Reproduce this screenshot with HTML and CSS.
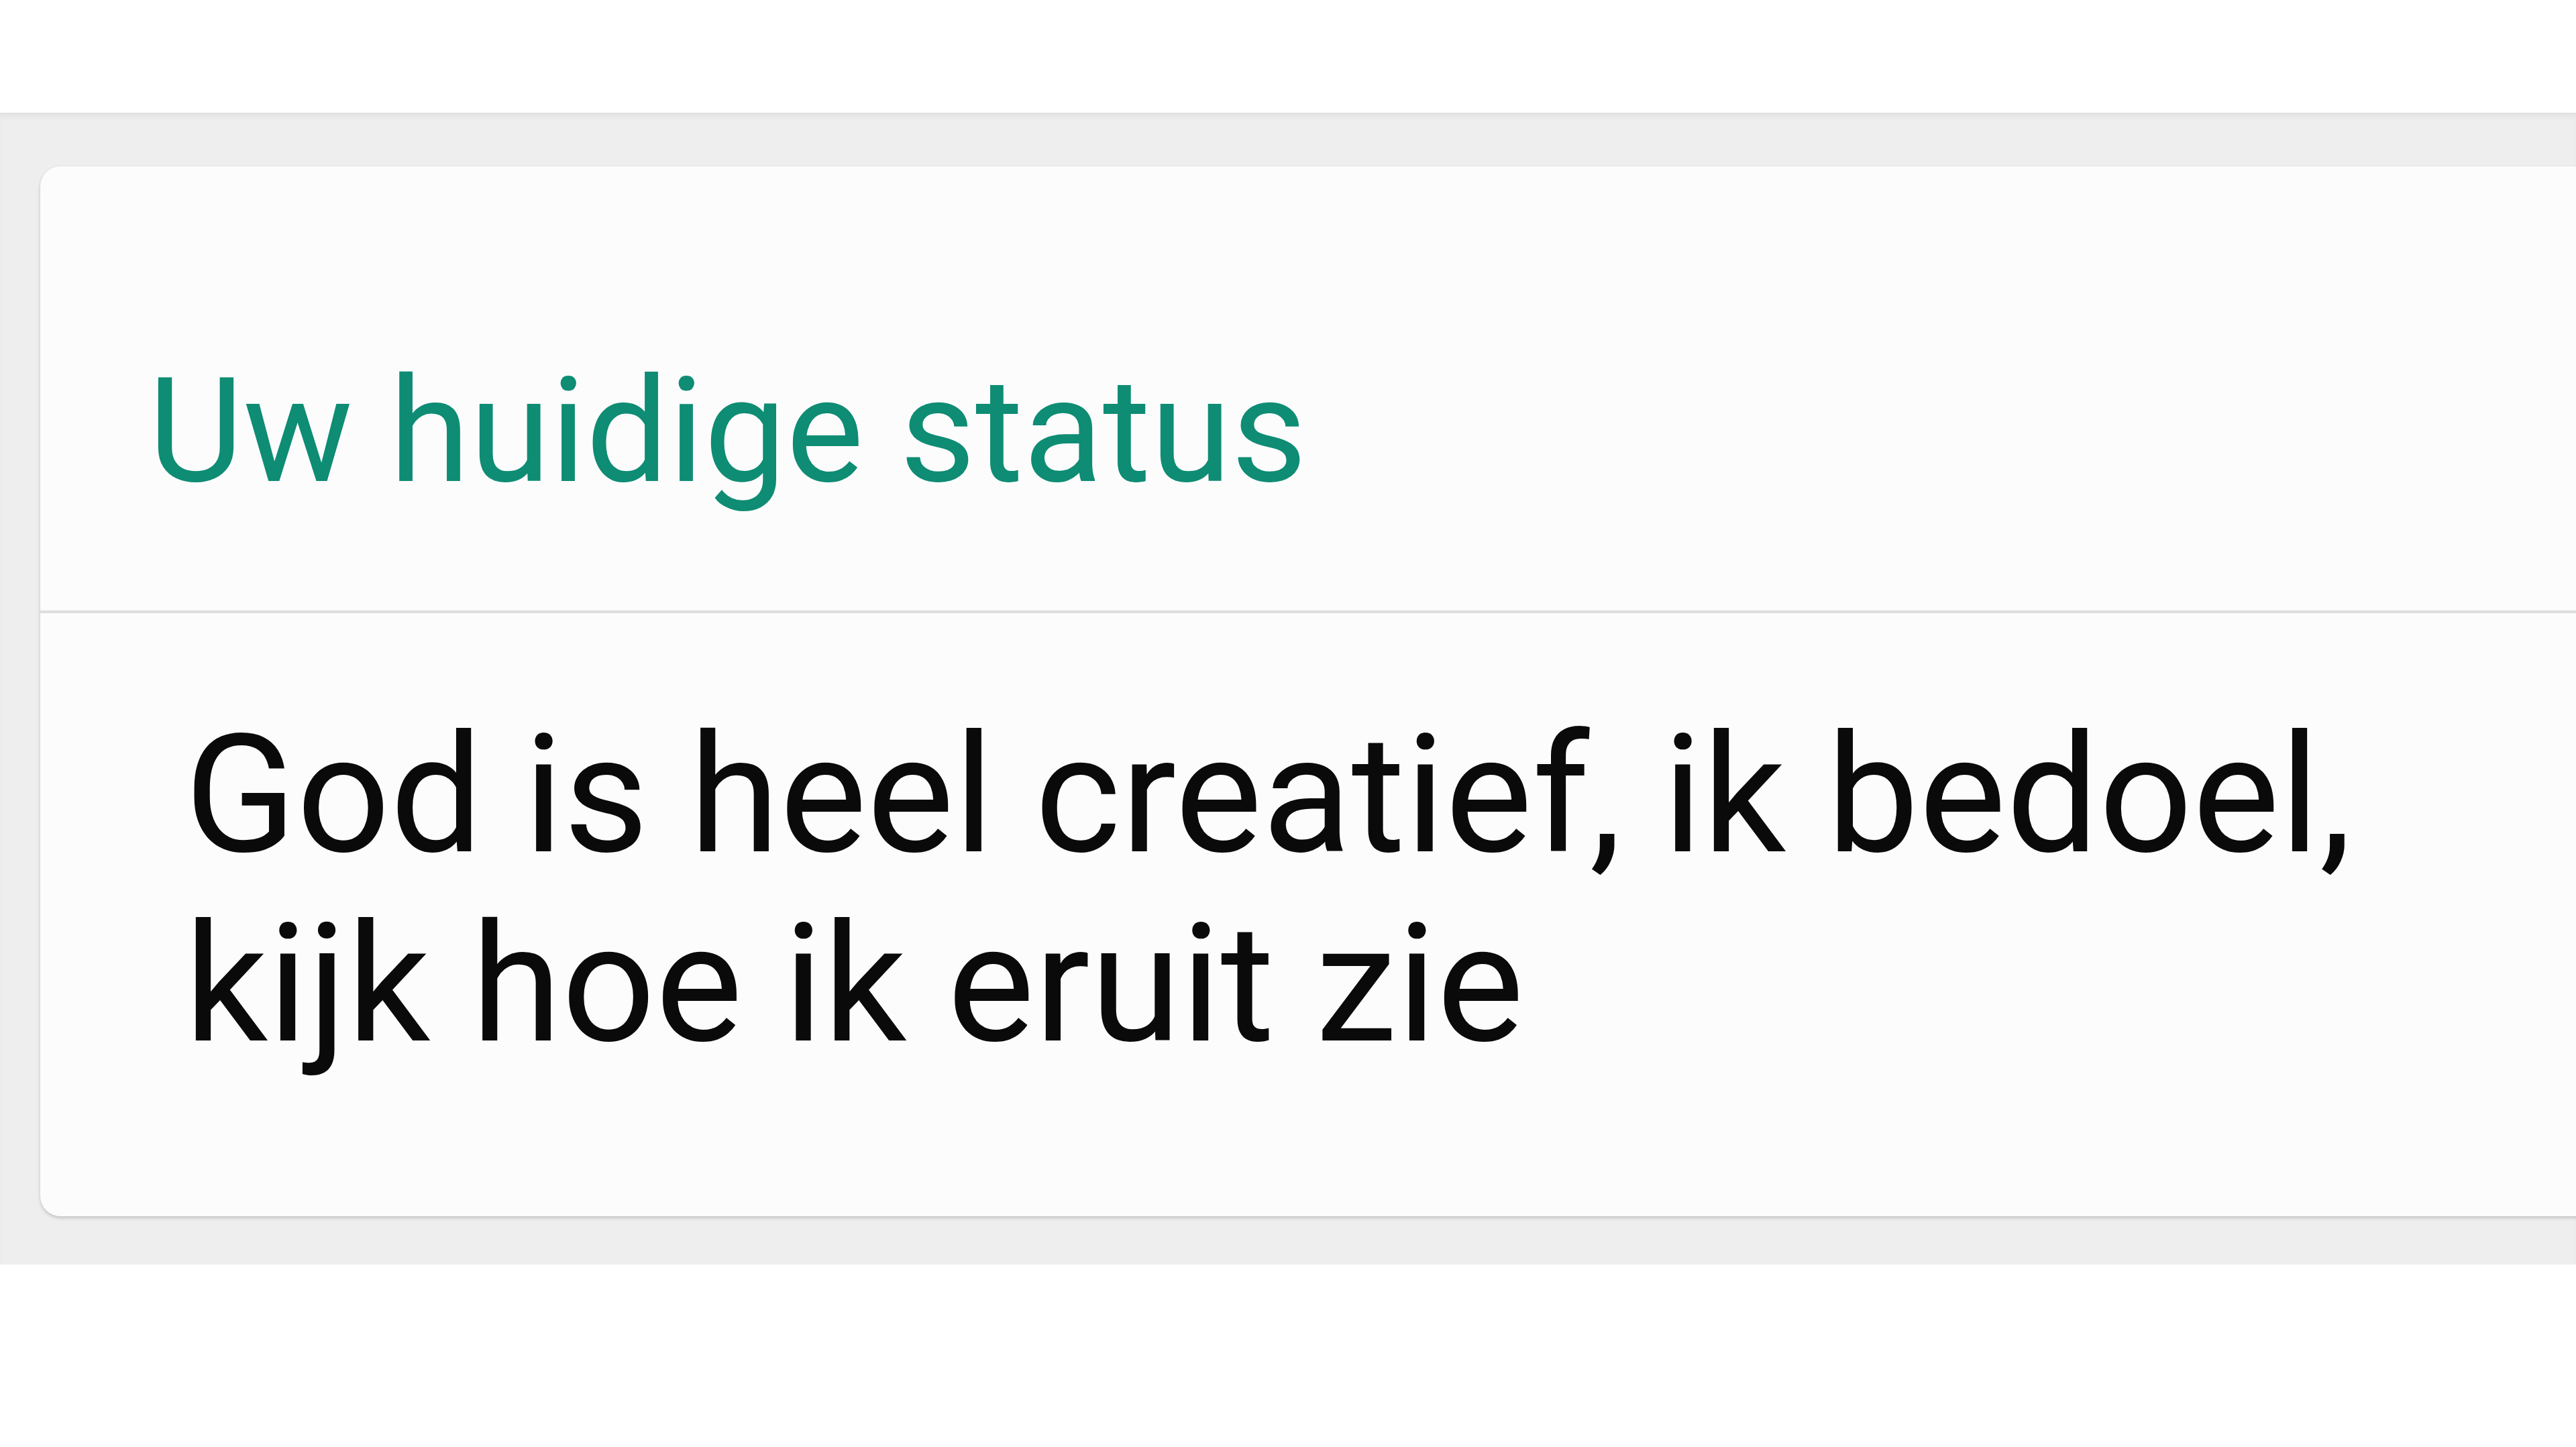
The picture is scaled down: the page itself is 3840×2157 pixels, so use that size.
FILE: index.html
```html
<!DOCTYPE html>
<html lang="nl">
<head>
  <meta charset="UTF-8">
  <meta name="viewport" content="width=device-width, initial-scale=1.0"/>
  <title>Status</title>
  <link rel="stylesheet" href="styles.css">
</head>
<body>

  <div class="top-space"></div>

  <div class="panel">
    <div class="status-card">
      <div class="card-header">Uw huidige status</div>
      <div class="card-body">God is heel creatief, ik bedoel,<br>kijk hoe ik eruit zie</div>
    </div>
  </div>

</body>
</html>
```

FILE: styles.css
```css
:root {
  --teal: #0e8c74;
  --panel: #eeeeee;
  --card: #fcfcfc;
  --line: #dedede;
}

* {
  margin: 0;
  padding: 0;
  box-sizing: border-box;
}

body {
  background: #ffffff;
  font-family: Roboto, "Noto Sans", sans-serif;
  overflow: hidden;
}

.top-space {
  height: 168px;
}

.panel {
  background: var(--panel);
  padding: 80px 0 72px 60px;
  box-shadow: inset 0 10px 12px -6px rgba(0, 0, 0, 0.07);
}

.status-card {
  background: var(--card);
  border-radius: 30px 0 0 30px;
  margin-right: -60px;
  box-shadow: 0 3px 5px rgba(0, 0, 0, 0.16), 0 0 3px rgba(0, 0, 0, 0.06);
}

.card-header {
  color: var(--teal);
  font-size: 218px;
  line-height: 218px;
  padding: 286px 0 158px 161px;
  border-bottom: solid 4px var(--line);
}

.card-body {
  color: #0a0a0a;
  font-size: 245px;
  line-height: 282px;
  padding: 131px 0 204px 215px;
}
```
